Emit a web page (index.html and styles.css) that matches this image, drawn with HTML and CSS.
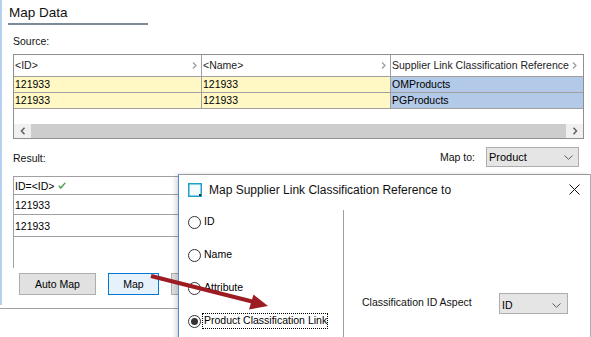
FILE: index.html
```html
<!DOCTYPE html>
<html>
<head>
<meta charset="utf-8">
<link rel="stylesheet" href="styles.css">
</head>
<body>
<div class="app">
  <div class="main">
    <div class="title">Map Data</div>
    <div class="lbl source-lbl">Source:</div>
    <div class="src">
      <div class="srow head">
        <div class="cell c1"><span>&lt;ID&gt;</span><svg class="hchev" width="5" height="7" viewBox="0 0 5 7"><path d="M1 0.5 L4 3.5 L1 6.5" fill="none" stroke="#9a9a9a" stroke-width="1.2"/></svg></div>
        <div class="cell c2"><span>&lt;Name&gt;</span><svg class="hchev" width="5" height="7" viewBox="0 0 5 7"><path d="M1 0.5 L4 3.5 L1 6.5" fill="none" stroke="#9a9a9a" stroke-width="1.2"/></svg></div>
        <div class="cell c3"><span>Supplier Link Classification Reference</span><svg class="hchev" width="5" height="7" viewBox="0 0 5 7"><path d="M1 0.5 L4 3.5 L1 6.5" fill="none" stroke="#9a9a9a" stroke-width="1.2"/></svg></div>
      </div>
      <div class="srow data">
        <div class="cell c1 yel">121933</div>
        <div class="cell c2 yel">121933</div>
        <div class="cell c3 blu">OMProducts</div>
      </div>
      <div class="srow data">
        <div class="cell c1 yel">121933</div>
        <div class="cell c2 yel">121933</div>
        <div class="cell c3 blu">PGProducts</div>
      </div>
      <div class="blank"></div>
      <div class="hscroll">
        <div class="sbtn"><svg width="6" height="8" viewBox="0 0 6 8"><path d="M4.5 0.8 L1.5 4 L4.5 7.2" fill="none" stroke="#606060" stroke-width="1.5"/></svg></div>
        <div class="sthumb"></div>
        <div class="sbtn"><svg width="6" height="8" viewBox="0 0 6 8"><path d="M1.5 0.8 L4.5 4 L1.5 7.2" fill="none" stroke="#606060" stroke-width="1.5"/></svg></div>
      </div>
    </div>
    <div class="result-bar">
      <div class="lbl result-lbl">Result:</div>
      <div class="mapto">
        <span class="lbl">Map to:</span>
        <div class="combo product">
          <span>Product</span>
          <svg width="9" height="5" viewBox="0 0 9 5"><path d="M0.5 0.5 L4.5 4.3 L8.5 0.5" fill="none" stroke="#5a5a5a" stroke-width="1"/></svg>
        </div>
      </div>
    </div>
    <div class="res">
      <div class="rrow r0">ID=&lt;ID&gt; <svg class="tick" width="8" height="7" viewBox="0 0 8 7"><path d="M0.8 3.8 L2.8 6 L7.2 0.8" fill="none" stroke="#3c9a3c" stroke-width="1.3"/></svg></div>
      <div class="rrow r1">121933</div>
      <div class="rrow r2">121933</div>
    </div>
    <div class="buttons">
      <div class="btn auto">Auto Map</div>
      <div class="btn map">Map</div>
      <div class="btn more"></div>
    </div>
  </div>
  <div class="rule"></div>

  <div class="dialog">
    <div class="dlg-title">
      <svg class="dlg-icon" width="14" height="14" viewBox="0 0 14 14"><rect x="0.75" y="0.75" width="12.5" height="12.5" fill="#f4fbfd" stroke="#1ea0c8" stroke-width="1.5"/><rect x="11" y="11" width="2" height="2" fill="#333"/></svg>
      <span class="dlg-text">Map Supplier Link Classification Reference to</span>
      <svg class="dlg-close" width="11" height="11" viewBox="0 0 11 11"><path d="M0.5 0.5 L10.5 10.5 M10.5 0.5 L0.5 10.5" stroke="#111" stroke-width="1"/></svg>
    </div>
    <div class="dlg-body">
      <div class="options">
        <div class="opt"><span class="radio"></span><span class="opt-lbl">ID</span></div>
        <div class="opt"><span class="radio"></span><span class="opt-lbl">Name</span></div>
        <div class="opt"><span class="radio"></span><span class="opt-lbl">Attribute</span></div>
        <div class="opt"><span class="radio checked"></span><span class="opt-lbl focus">Product Classification Link</span></div>
      </div>
      <div class="pane">
        <div class="aspect">
          <span class="aspect-lbl">Classification ID Aspect</span>
          <div class="combo idcombo">
            <span>ID</span>
            <svg width="9" height="5" viewBox="0 0 9 5"><path d="M0.5 0.5 L4.5 4.3 L8.5 0.5" fill="none" stroke="#5a5a5a" stroke-width="1"/></svg>
          </div>
        </div>
      </div>
    </div>
  </div>

  <svg class="arrow" width="591" height="337" viewBox="0 0 591 337">
    <line x1="151" y1="276" x2="254" y2="302" stroke="#9c1c22" stroke-width="4"/>
    <polygon points="268,306 249,309.5 253.5,294.5" fill="#9c1c22"/>
  </svg>
</div>
</body>
</html>
```

FILE: styles.css
```css
* { box-sizing: border-box; }
html, body { margin: 0; padding: 0; background: #fff; }

.app {
  position: relative;
  width: 591px;
  height: 337px;
  overflow: hidden;
  background: #fff;
  font-family: "Liberation Sans", Arial, sans-serif;
  font-size: 10.5px;
  color: #000;
}

.main {
  height: 305px;
  border-left: 2px solid #b5cfef;
  display: flex;
  flex-direction: column;
  align-items: flex-start;
}

.title {
  margin-left: 6px;
  width: 140px;
  height: 25px;
  padding: 2px 0 0 1px;
  line-height: 21px;
  font-size: 13.5px;
  color: #111;
  border-bottom: 2px solid #7b8a99;
}

.lbl { line-height: 13px; color: #111; }
.source-lbl { margin: 10px 0 0 11px; }

.src {
  margin: 6px 0 0 11px;
  width: 571px;
  height: 85px;
  border: 1px solid #8d8f91;
  display: flex;
  flex-direction: column;
}

.srow {
  display: grid;
  grid-template-columns: 188px 189px 1fr;
  border-bottom: 1px solid #a0a0a0;
}
.srow.head { height: 22px; line-height: 21px; background: #fff; color: #222; }
.srow.data { height: 16px; line-height: 15px; }

.cell {
  padding-left: 1px;
  border-right: 1px solid #a0a0a0;
  white-space: nowrap;
  overflow: hidden;
}
.cell.c3 { border-right: none; }
.head .cell { display: flex; align-items: center; justify-content: space-between; padding-right: 4px; }
.head .cell.c3 { justify-content: flex-start; gap: 3px; }
.hchev { flex: none; }

.yel { background: #fff8c4; }
.blu { background: #b2c9e8; }

.blank { height: 15px; }

.hscroll {
  height: 14px;
  display: flex;
  background: #f0f0f0;
}
.sbtn {
  width: 17px;
  display: flex;
  align-items: center;
  justify-content: center;
}
.sthumb { flex: 1; background: #cdcdcd; }

.result-bar {
  margin: 8px 0 0 11px;
  width: 566px;
  display: flex;
  justify-content: space-between;
  align-items: center;
}
.result-lbl { padding-top: 3px; }
.mapto { display: flex; align-items: center; gap: 11px; }

.combo {
  display: flex;
  align-items: center;
  justify-content: space-between;
  border: 1px solid #adadad;
  background: #e5e5e5;
  color: #000;
}
.combo.product { width: 93px; height: 20px; padding: 0 5px 0 2px; font-size: 11px; }

.res {
  margin: 9px 0 0 11px;
  width: 571px;
  height: 92px;
  border-top: 1px solid #a0a0a0;
  border-left: 1px solid #a0a0a0;
}
.rrow {
  padding-left: 1px;
  border-bottom: 1px solid #a0a0a0;
  display: flex;
  align-items: center;
}
.r0 { height: 18px; }
.r1 { height: 20px; }
.r2 { height: 22px; }
.tick { margin-left: 4px; }

.buttons {
  margin: 5px 0 0 17px;
  display: flex;
  gap: 12px;
}
.btn {
  height: 22px;
  line-height: 20px;
  text-align: center;
  border: 1px solid #adadad;
  background: #e1e1e1;
  color: #000;
}
.btn.auto { width: 77px; }
.btn.map { width: 51px; background: #e5f1fb; border-color: #0078d7; }
.btn.more { width: 77px; }

.rule {
  margin-top: 3px;
  border-top: 1px solid #a0a0a0;
}

/* dialog */
.dialog {
  position: absolute;
  left: 178px;
  top: 174px;
  width: 413px;
  height: 200px;
  background: #fff;
  border: 1px solid #9a9a9a;
  border-left-color: #4d8fd6;
  border-right-color: #b0b0b0;
  box-shadow: -2px 1px 5px rgba(0, 0, 0, 0.18);
  font-family: "Liberation Sans", Arial, sans-serif;
}
.dlg-title {
  height: 29px;
  display: flex;
  align-items: center;
  padding-left: 9px;
  padding-right: 10px;
}
.dlg-icon { flex: none; }
.dlg-text { margin-left: 7px; font-size: 12px; color: #111; flex: 1; }
.dlg-close { flex: none; }

.dlg-body { display: flex; }
.options {
  width: 164px;
  padding: 12px 0 0 9px;
  display: flex;
  flex-direction: column;
  gap: 20px;
}
.opt { height: 13px; display: flex; align-items: center; }
.radio {
  width: 13px;
  height: 13px;
  border: 1px solid #333;
  border-radius: 50%;
  background: #fff;
  display: flex;
  align-items: center;
  justify-content: center;
  flex: none;
}
.radio.checked::after {
  content: "";
  width: 7px;
  height: 7px;
  border-radius: 50%;
  background: #333;
}
.opt-lbl {
  margin-left: 3px;
  line-height: 13px;
  margin-top: -2px;
  color: #000;
  white-space: nowrap;
}
.opt-lbl.focus {
  margin-left: 2px;
  padding: 0 0 1px 1px;
  outline: 1px dotted #000;
}

.pane {
  margin-top: 6px;
  height: 140px;
  border-left: 1px solid #a0a0a0;
  padding: 83px 0 0 18px;
}
.aspect { display: flex; align-items: center; }
.aspect-lbl { width: 137px; margin-top: -3px; color: #111; }
.combo.idcombo {
  width: 69px;
  height: 21px;
  padding: 3px 6px 0 2px;
}

/* overlay annotation arrow */
.arrow {
  position: absolute;
  left: 0;
  top: 0;
  pointer-events: none;
}
```
